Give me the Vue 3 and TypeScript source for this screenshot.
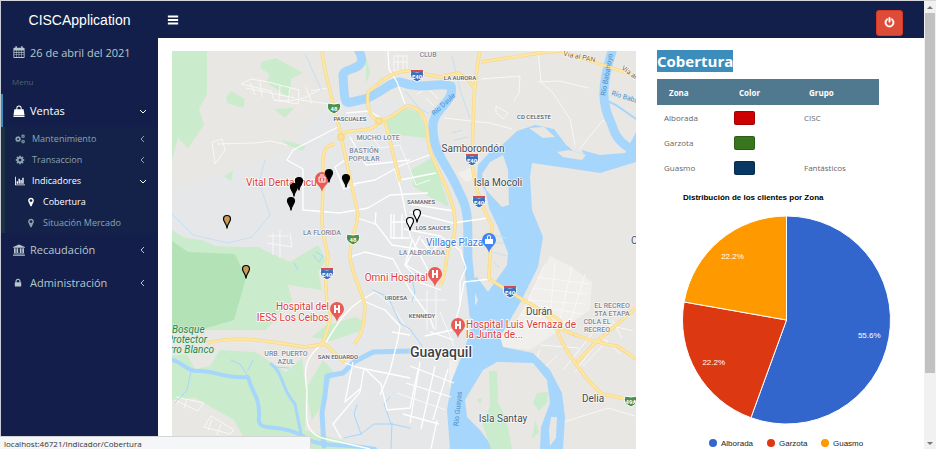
<script setup lang="ts">
import { computed, ref } from 'vue'

interface Shape { d: string; t?: string }
interface Label { x: number; y: number; text: string; kind: string; anchor?: string; turn?: number }
interface Zone { name: string; color: string; group: string }

const cog = 'M1152 896q0-106-75-181t-181-75-181 75-75 181 75 181 181 75 181-75 75-181zm512-109v222q0 12-8 23t-20 13l-185 28q-19 54-39 91 35 50 107 138 10 12 10 25t-9 23q-27 37-99 108t-94 71q-12 0-26-9l-138-108q-44 23-91 38-16 136-29 186-7 28-36 28h-222q-14 0-24.5-8.5t-11.5-21.5l-28-184q-49-16-90-37l-141 107q-10 9-25 9-14 0-25-11-126-114-165-168-7-10-7-23 0-12 8-23 15-21 51-66.5t54-70.5q-27-50-41-99l-183-27q-13-2-21-12.5t-8-23.5v-222q0-12 8-23t19-13l186-28q14-46 39-92-40-57-107-138-10-12-10-24 0-10 9-23 26-36 98.5-107.5t94.5-71.5q13 0 26 10l138 107q44-23 91-38 16-136 29-186 7-28 36-28h222q14 0 24.5 8.5t11.5 21.5l28 184q49 16 90 37l142-107q9-9 24-9 13 0 25 10 129 119 165 170 7 8 7 22 0 12-8 23-15 21-51 66.5t-54 70.5q26 50 41 98l183 28q13 2 21 12.5t8 23.5z'

const icons: Record<string, Shape[]> = {
  bars: [{ d: 'M128 240h1536v290H128zM128 750h1536v290H128zM128 1260h1536v290H128z' }],
  power: [{ d: 'M1664 896q0 156-61 298t-164 245-245 164-298 61-298-61-245-164-164-245-61-298q0-182 80.5-343t226.5-270q43-32 95.5-25t83.5 50q32 42 24.5 94.5t-49.5 84.5q-98 74-151.5 181t-53.5 228q0 104 40.5 198.5t109.5 163.5 163.5 109.5 198.5 40.5 198.5-40.5 163.5-109.5 109.5-163.5 40.5-198.5q0-121-53.5-228t-151.5-181q-42-32-49.5-84.5t24.5-94.5q31-43 84-50t95 25q146 109 226.5 270t80.5 343zm-640-768v640q0 52-38 90t-90 38-90-38-38-90v-640q0-52 38-90t90-38 90 38 38 90z' }],
  calendar: [{ d: 'M64 380q0-120 120-120h170V130q0-130 110-130t110 130v130h644V130q0-130 110-130t110 130v130h170q120 0 120 120v1290q0 122-120 122H184q-120 0-120-122zM190 660v250h270V660zm350 0v250h310V660zm390 0v250h310V660zm390 0v250h280V660zM190 990v270h270V990zm350 0v270h310V990zm390 0v270h310V990zm390 0v270h280V990zM190 1340v320h270v-320zm350 0v320h310v-320zm390 0v320h310v-320zm390 0v320h280v-320z' }],
  bag: [{ d: 'M500 620V470a396 396 0 0 1 792 0v150h290l140 920H70l140-920zm140 0h512V470a256 256 0 0 0-512 0zM60 1600h1672v120q0 60-60 60H120q-60 0-60-60z' }],
  cogs: [
    { d: cog, t: 'translate(-80 290) scale(.7)' },
    { d: cog, t: 'translate(1060 0) scale(.43)' },
    { d: cog, t: 'translate(1060 980) scale(.43)' }
  ],
  cog: [{ d: cog }],
  chart: [{ d: 'M0 130h150v1390h1642v150H0zM290 960h240v420H290zM630 480h240v900H630zM970 720h240v660H970zM1310 300h240v1080h-240z' }],
  marker: [{ d: 'M1152 640q0-106-75-181t-181-75-181 75-75 181 75 181 181 75 181-75 75-181zm256 0q0 109-33 179l-364 774q-16 33-47.5 52t-67.5 19-67.5-19-46.5-52l-365-774q-33-70-33-179 0-212 150-362t362-150 362 150 150 362z' }],
  bank: [{ d: 'M896 60l880 380v110H16V440zM150 630h250v720H150zM520 630h250v720H520zM1020 630h250v720h-250zM1390 630h250v720h-250zM90 1410h1610v130H90zM10 1590h1772v150H10z' }],
  lock: [{ d: 'M640 768h512v-192q0-106-75-181t-181-75-181 75-75 181v192zm832 96v576q0 40-28 68t-68 28h-960q-40 0-68-28t-28-68v-576q0-40 28-68t68-28h32v-192q0-184 132-316t316-132 316 132 132 316v192h32q40 0 68 28t28 68z' }]
}

const menuOpen = ref(true)
const subItems = [
  { icon: 'cogs', text: 'Mantenimiento', open: false },
  { icon: 'cog', text: 'Transaccion', open: false },
  { icon: 'chart', text: 'Indicadores', open: true }
]
const leaves = [
  { text: 'Cobertura', active: true },
  { text: 'Situación Mercado', active: false }
]
const zones: Zone[] = [
  { name: 'Alborada', color: 'red', group: 'CISC' },
  { name: 'Garzota', color: 'green', group: '' },
  { name: 'Guasmo', color: 'navy', group: 'Fantásticos' }
]

const shares = [
  { name: 'Alborada', value: 5, color: '#3366cc', x: 56 },
  { name: 'Garzota', value: 2, color: '#dc3912', x: 114 },
  { name: 'Guasmo', value: 2, color: '#ff9900', x: 168 }
]
const slices = computed(() => {
  const total = shares.reduce((sum, s) => sum + s.value, 0)
  const at = (turn: number, r: number) => [129.5 + r * Math.sin(turn * 2 * Math.PI), 140 - r * Math.cos(turn * 2 * Math.PI)]
  let from = 0
  return shares.map((s) => {
    const part = s.value / total
    const [ax, ay] = at(from, 104)
    const [bx, by] = at(from + part, 104)
    const [lx, ly] = at(from + part / 2, 84)
    from += part
    return {
      color: s.color,
      d: `M129.5 140L${ax} ${ay}A104 104 0 ${part > 0.5 ? 1 : 0} 1 ${bx} ${by}Z`,
      lx,
      ly: ly + 3,
      text: `${(part * 100).toFixed(1)}%`
    }
  })
})

const places: Label[] = [
  { x: 428, y: 57, text: 'CLUB', kind: 'area' },
  { x: 460, y: 80, text: 'LA AURORA', kind: 'hood' },
  { x: 350, y: 121, text: 'PASCUALES', kind: 'hood' },
  { x: 378, y: 140, text: 'MUCHO LOTE', kind: 'area' },
  { x: 364, y: 153, text: 'BASTIÓN', kind: 'area' },
  { x: 364, y: 161, text: 'POPULAR', kind: 'area' },
  { x: 534, y: 119, text: 'CD CELESTE', kind: 'hood' },
  { x: 473, y: 152, text: 'Samborondón', kind: 'town' },
  { x: 498, y: 186, text: 'Isla Mocoli', kind: 'town' },
  { x: 421, y: 204, text: 'SAMANES', kind: 'hood' },
  { x: 433, y: 230, text: 'LOS SAUCES', kind: 'hood' },
  { x: 322, y: 235, text: 'LA FLORIDA', kind: 'area' },
  { x: 422, y: 255, text: 'LA ALBORADA', kind: 'area' },
  { x: 396, y: 300, text: 'URDESA', kind: 'hood' },
  { x: 422, y: 318, text: 'KENNEDY', kind: 'hood' },
  { x: 539, y: 315, text: 'Durán', kind: 'town' },
  { x: 612, y: 308, text: 'EL RECREO', kind: 'area' },
  { x: 612, y: 316, text: '5TA ETAPA', kind: 'area' },
  { x: 597, y: 324, text: 'CDLA EL', kind: 'area' },
  { x: 597, y: 332, text: 'RECREO', kind: 'area' },
  { x: 286, y: 356, text: 'URB. PUERTO', kind: 'area' },
  { x: 286, y: 364, text: 'AZUL', kind: 'area' },
  { x: 338, y: 359, text: 'SAN EDUARDO', kind: 'hood' },
  { x: 441, y: 357, text: 'Guayaquil', kind: 'city' },
  { x: 503, y: 422, text: 'Isla Santay', kind: 'town' },
  { x: 593, y: 402, text: 'Delia', kind: 'town' },
  { x: 631, y: 244, text: 'C', kind: 'town', anchor: 'start' },
  { x: 246, y: 186, text: 'Vital Dentalmcu', kind: 'poi', anchor: 'start' },
  { x: 428, y: 281, text: 'Omni Hospital', kind: 'poi', anchor: 'end' },
  { x: 329, y: 310, text: 'Hospital del', kind: 'poi', anchor: 'end' },
  { x: 329, y: 321, text: 'IESS Los Ceibos', kind: 'poi', anchor: 'end' },
  { x: 466, y: 328, text: 'Hospital Luis Vernaza de', kind: 'poi', anchor: 'start' },
  { x: 466, y: 338, text: 'la Junta de...', kind: 'poi', anchor: 'start' },
  { x: 426, y: 246, text: 'Village Plaza', kind: 'shop', anchor: 'start' },
  { x: 172, y: 333, text: 'Bosque', kind: 'park', anchor: 'start' },
  { x: 207, y: 343, text: 'Protector', kind: 'park', anchor: 'end' },
  { x: 214, y: 353, text: 'Cerro Blanco', kind: 'park', anchor: 'end' },
  { x: 445, y: 106, text: 'Río Daule', kind: 'stretch', turn: -43 },
  { x: 609, y: 75, text: 'Río Babahoyo', kind: 'stretch', turn: -80 },
  { x: 611, y: 95, text: 'Río Babahoyo', kind: 'stretch', anchor: 'start', turn: 17 },
  { x: 460, y: 409, text: 'Río Guayas', kind: 'stretch', turn: -84 },
  { x: 579, y: 59, text: 'Vía al PAN', kind: 'road', turn: 12 },
  { x: 621, y: 69, text: 'Vía al PAN', kind: 'road', anchor: 'start', turn: 36 }
]
const shields = [
  { x: 417, y: 76, text: 'E40' }, { x: 472, y: 160, text: 'E40' }, { x: 479, y: 202, text: 'E40' },
  { x: 510, y: 292, text: 'E40' }, { x: 327, y: 274, text: 'E40' },
  { x: 334, y: 108, text: '48' }, { x: 353, y: 239, text: '48' }, { x: 631, y: 401, text: '49A' }
]
const pois = [
  { x: 322, y: 179, kind: 'dental' }, { x: 435, y: 274, kind: 'hospital' },
  { x: 337, y: 309, kind: 'hospital' }, { x: 458, y: 325, kind: 'hospital' }, { x: 489, y: 240, kind: 'shop' }
]
const pins = [
  { x: 299, y: 182, kind: 'dark' }, { x: 294, y: 188, kind: 'dark' }, { x: 291, y: 202, kind: 'dark' },
  { x: 329, y: 174, kind: 'dark' }, { x: 346, y: 179, kind: 'dark' },
  { x: 227, y: 220, kind: 'tan' }, { x: 246, y: 270, kind: 'tan' },
  { x: 417, y: 214, kind: 'clear' }, { x: 410, y: 222, kind: 'clear' }
]
const highways = [
  'M322 51C323 66 329 88 335 110C338 126 341 132 346 160L358 214C357 228 350 238 350 257C352 277 364 294 365 307C364 325 362 335 354 344',
  'M335 144C321 145 323 158 323 180L322 220C322 240 328 249 328 258C324 275 326 285 327 304C333 313 331 322 322 344L310 347',
  'M341 136C344 129 356 132 369 129C378 127 377 122 384 119C393 119 401 107 408 106C422 108 427 118 428 140C431 163 444 175 453 207C457 224 455 240 448 250C445 264 447 272 440 286',
  'M379 121C368 117 367 105 368 92C381 82 389 72 408 71L440 77L458 73L467 79L475 89',
  'M385 121L400 181',
  'M480 51C477 64 476 78 474 96L472 160C473 186 483 208 492 226C492 238 489 262 489 279L535 307C562 319 567 324 556 330',
  'M481 62L540 53L560 51L636 76',
  'M521 300C539 306 555 321 559 335C568 357 591 385 602 394L630 400',
  'M556 326C568 334 601 344 617 346L636 359', 'M636 308L593 345L577 362',
  'M207 343C237 335 268 341 304 347L325 344L345 363'
]
const streets = [
  'M338 127L293 150L287 160L303 169L303 210L340 213L368 208L390 195L428 193',
  'M346 113L369 111L381 118', 'M388 51L389 69L397 82L405 104', 'M345 160L335 167L344 189L356 185',
  'M353 184L375 180L402 165L432 154', 'M350 137L366 165L410 160',
  'M350 257L365 252L393 259L410 290', 'M357 218L376 224L392 245L435 252', 'M376 212L375 225',
  'M395 169L401 190L410 235L436 286', 'M400 180L436 173',
  'M410 204L454 211', 'M410 212L453 223L488 218',
  'M404 229L440 236L460 250L466 268L460 282L460 305L453 330', 'M412 240L405 265L421 283L441 290', 'M420 236L406 265L425 276',
  'M421 239L431 253L443 240', 'M391 214V238H410M394 214V238M402 214V238M391 222H409',
  'M322 344C306 357 303 367 307 390C307 415 302 431 322 438L370 449', 'M325 344C340 318 348 309 360 301L375 292',
  'M366 302L385 310L400 326L398 339L390 371L380 395', 'M345 363L356 367L410 378', 'M353 362L345 402L361 388',
  'M364 368L360 392L333 424L341 438', 'M364 368L381 384L387 410L410 408L418 370M392 332L410 335',
  'M410 366L454 383M406 383L451 397M420 362L410 423M435 366L421 429M448 369L433 420M403 414L439 424M437 420L431 449',
  'M430 332L454 340M425 336L452 330M410 290L430 318L434 329',
  'M491 279L464 282L460 305'
]
const lanes = [
  'M241 84L271 91L274 100L298 104L299 90L268 82L251 79ZM250 82L255 95M260 82L262 97M280 86L279 101M290 88L288 102M246 88L295 98',
  'M274 100L289 101L304 98L323 88M306 87L312 104M311 91L328 88M300 100L330 104', 'M212 142L215 164L225 150L222 139ZM217 144L254 143L271 141L287 145',
  'M538 51L541 82L553 93L570 119L575 145', 'M481 79L520 76L519 93L514 101', 'M538 82L559 81L589 88', 'M444 118L490 123L512 129', 'M574 146L578 151L603 120L620 137',
  'M267 243L292 247L290 233M273 233V255M280 230V258M268 236H288', 'M176 397L204 403L198 411L175 400M180 396L177 404M187 399L184 408M204 427L211 416L234 430L230 434ZM212 419L208 430M221 424L217 435',
  'M564 422L608 408L635 416', 'M540 350L535 362M558 355L545 367M593 348L575 372', 'M394 56V71H407V56ZM398 56V71M403 56V71M394 62H407M426 98L434 106M430 90L438 99M417 94L440 80M496 106L508 113L503 119L496 113Z',
  'M369 133L380 148L400 145L416 185L430 180M397 393L446 410M440 312L454 346M407 300L447 300M436 290V330M427 290V330M375 292L392 306L408 330',
  'M545 264L527 303M555 262L550 317M572 266L560 319M585 274L571 320M537 277L589 284M532 288L587 294M529 300L585 304M536 306L583 314M535 324L565 322M520 315L559 318',
  'M540 345L579 348M563 370L592 334M583 366L608 340M600 336L621 354M605 324L633 331M612 320L622 338'
]
</script>

<template>
  <div class="page">
    <div class="app">
      <header class="topbar">
        <a class="brand" href="#">CISCApplication</a>
        <button class="toggle" type="button" aria-label="Menu" :aria-expanded="menuOpen">
          <svg viewBox="0 0 1792 1792"><path v-for="(s, i) in icons.bars" :key="i" :d="s.d" /></svg>
        </button>
        <button class="logout" type="button" aria-label="Salir">
          <svg viewBox="0 0 1792 1792"><path v-for="(s, i) in icons.power" :key="i" :d="s.d" /></svg>
        </button>
      </header>

      <div class="body">
        <nav class="side">
          <div class="date">
            <svg class="ico big" viewBox="0 0 1792 1792"><path v-for="(s, i) in icons.calendar" :key="i" :d="s.d" fill-rule="evenodd" /></svg>
            <span>26 de abril del 2021</span>
          </div>
          <div class="heading">Menu</div>
          <a class="item current" href="#">
            <svg class="ico big" viewBox="0 0 1792 1792"><path v-for="(s, i) in icons.bag" :key="i" :d="s.d" fill-rule="evenodd" /></svg>
            <span>Ventas</span>
            <svg class="arrow down" viewBox="0 0 8 8"><path d="M5 1L2 4L5 7" /></svg>
          </a>
          <div class="sub">
            <a v-for="s in subItems" :key="s.text" class="subitem" :class="{ open: s.open }" href="#">
              <svg class="ico" viewBox="0 0 1792 1792"><path v-for="(p, i) in icons[s.icon]" :key="i" :d="p.d" :transform="p.t" fill-rule="evenodd" /></svg>
              <span>{{ s.text }}</span>
              <svg class="arrow" :class="{ down: s.open }" viewBox="0 0 8 8"><path d="M5 1L2 4L5 7" /></svg>
            </a>
            <a v-for="l in leaves" :key="l.text" class="subitem leaf" :class="{ open: l.active }" href="#">
              <svg class="ico" viewBox="0 0 1792 1792"><path v-for="(p, i) in icons.marker" :key="i" :d="p.d" /></svg>
              <span>{{ l.text }}</span>
            </a>
          </div>
          <a class="item" href="#">
            <svg class="ico big" viewBox="0 0 1792 1792"><path v-for="(s, i) in icons.bank" :key="i" :d="s.d" /></svg>
            <span>Recaudación</span>
            <svg class="arrow" viewBox="0 0 8 8"><path d="M5 1L2 4L5 7" /></svg>
          </a>
          <a class="item" href="#">
            <svg class="ico lock" viewBox="0 0 1792 1792"><path v-for="(s, i) in icons.lock" :key="i" :d="s.d" /></svg>
            <span>Administración</span>
            <svg class="arrow" viewBox="0 0 8 8"><path d="M5 1L2 4L5 7" /></svg>
          </a>
        </nav>

        <main class="content">
          <div class="mapbox">
            <svg class="map" viewBox="172 51 464 398" role="img" aria-label="Mapa">
              <rect class="land" x="172" y="51" width="464" height="398" />
              <path class="urban" d="M290 150L330 100L400 100L440 110L445 165L468 230L470 330L450 400L455 449L330 449L325 360L372 300L330 250L240 262L172 236V190Z" />
              <path class="green" d="M172 51H207V94L199 109L204 125L188 148L178 138L172 160ZM226 97L231 91L245 99L243 108L227 103ZM262 62L276 58L303 73L291 79L290 98L266 82L270 75L260 67ZM274 109L294 108L285 118ZM282 140L306 146L302 151L286 144ZM224 176L233 171L231 181ZM366 57L370 72L366 84ZM386 118L402 107L418 112L426 128L426 138L390 134ZM411 170L433 157L449 207L430 197L413 186Z" />
              <path class="pale" d="M172 230L185 238L202 240L215 246L240 247L258 247L290 262L318 245L326 260L318 272L322 290L288 285L292 300L266 330L172 330Z" />
              <path class="forest" d="M172 241L188 252L235 254L246 278L234 320L200 330L172 331Z" />
              <path class="pale" d="M172 356L187 354L195 369L210 366L220 350L255 352L286 372L302 358L306 390L305 430L372 449H250L234 420L195 398L172 400Z" />
              <path class="green" d="M312 337L325 326L355 317L366 322L360 331L331 341ZM323 360L334 372L320 408L312 420L305 390Z" />
              <path class="sand" d="M457 173L472 167L477 178L466 182ZM449 360L458 362L449 390ZM510 334L500 336L503 347L530 350L560 330L590 310L592 282L570 266L550 256L537 281Z" />
              <path v-for="(d, i) in lanes" :key="'l' + i" class="lane" :d="d" />
              <path class="river" stroke-width="9" d="M358 49C371 72 345 66 343 75C345 110 343 103 365 99C385 91 389 82 400 82C424 91 438 81 451 86C456 101 431 110 433 128C433 155 449 166 459 192C471 213 467 229 468 260L474 315" />
              <path class="river" stroke-width="9" d="M613 48C600 89 602 105 612 125C615 138 625 148 639 152" />
              <path class="river" stroke-width="2" d="M605 100C620 105 628 115 638 120" />
              <path class="water" fill-rule="evenodd" d="M636 132L625 153L600 155L567 146L554 129L535 125L517 131L502 145L490 152L478 165L477 178L486 192L489 208L498 227L508 253L507 265L488 292L477 277L471 280L473 323L463 353L452 380L447 410L450 449H563L565 417L562 393L550 370L533 353L503 347L500 337L510 320L520 303L538 267L543 237L532 210L530 177L532 163L567 168L600 173L636 162Z" />
              <path class="land" d="M490 162L503 155L508 170L509 205L502 207L486 190L482 174ZM497 362L533 363L547 380L550 403L541 427L540 449H494L480 430L467 417L465 400L483 370ZM551 417L557 417L556 438L550 446L549 430ZM529 128L544 127L555 137L543 138ZM557 152L569 150L586 155L582 160L563 157ZM567 145L581 149L584 154L573 151ZM475 293L478 300L475 306Z" />
              <path class="green" d="M489 371L497 371L498 403L506 417L512 449H491L482 422L490 407ZM537 393L548 392L547 403L539 411L533 403ZM535 420L539 432L532 439ZM477 399L483 398L480 404Z" />
              <path class="river" stroke-width="4" d="M172 360C183 362 187 372 199 371C214 370 223 379 248 377C252 393 260 397 259 416C256 436 280 419 309 440C323 447 350 444 375 449" />
              <path class="river" stroke-width="3" d="M271 364C284 373 281 389 295 404L302 439" />
              <path class="river" stroke-width="5" d="M410 351L373 352L354 362L343 373L327 376L325 395L322 413L324 446" />
              <path class="river" stroke-width="1" d="M191 372L187 390L175 403M248 376L240 364L231 360M248 370L253 360M275 367L289 368M344 438L361 434L374 424L392 424L410 428M392 423L391 449M391 424L384 404L390 397M361 434L354 414L357 405M313 255L319 262L323 256L316 252M294 263L298 270M410 270L415 292L412 301M373 290L388 297L400 323L410 329L422 346" />
              <path class="stream" d="M172 214L193 235L228 243L252 237L270 215L259 182L265 160M322 91L305 54M405 91L420 109L430 114M452 56L460 90L470 118" />
              <path class="stream" d="M452 133L462 130M454 140L468 137M495 235L507 238M495 243H504M493 252L506 256M494 263L500 268" />
              <path v-for="(d, i) in streets" :key="'s' + i" class="street" :d="d" />
              <path v-for="(d, i) in highways" :key="'c' + i" class="casing" :d="d" />
              <path v-for="(d, i) in highways" :key="'h' + i" class="highway" :d="d" />
              <circle class="junction" cx="341" cy="137" r="3" />
              <circle class="junction" cx="379" cy="121" r="3" />

              <g v-for="(s, i) in shields" :key="'e' + i" :transform="`translate(${s.x} ${s.y})`">
                <path :class="s.text === 'E40' ? 'shield blue' : 'shield greenish'" d="M-6 -5Q0 -3 6 -5Q9 2 0 6Q-9 2 -6 -5Z" />
                <path v-if="s.text === 'E40'" class="crown" d="M-6 -6H6V-4H-6Z" />
                <text class="route" x="0" y="3">{{ s.text }}</text>
              </g>
              <text
                v-for="(p, i) in places" :key="'t' + i" :class="p.kind" :x="p.x" :y="p.y"
                :text-anchor="p.anchor ?? 'middle'" :transform="p.turn ? `rotate(${p.turn} ${p.x} ${p.y})` : undefined"
              >{{ p.text }}</text>
              <g v-for="(p, i) in pois" :key="'p' + i" :transform="`translate(${p.x} ${p.y})`">
                <path :class="p.kind === 'shop' ? 'drop blueish' : 'drop'" d="M0 13C-1 7 -7 5 -7 0A7 7 0 0 1 7 0C7 5 1 7 0 13Z" />
                <path v-if="p.kind === 'hospital'" class="mark" d="M-2 -4V4M2 -4V4M-2 0H2" />
                <path v-else-if="p.kind === 'dental'" class="mark thin" d="M-3 -2H3V3H-3ZM-2 -4H2M0 -1V2M-1 1H1" />
                <path v-else class="bagmark" fill-rule="evenodd" d="M-4 -1H-2V-3A2 2 0 0 1 2 -3V-1H4V4H-4ZM-1 -1H1V-3A1 1 0 0 0 -1 -3Z" />
              </g>
              <path
                v-for="(p, i) in pins" :key="'m' + i" class="pin" :class="p.kind" :transform="`translate(${p.x} ${p.y})`"
                d="M0 8.500C0 4 -3.500 2 -3.500 -1A3.500 3.500 0 0 1 3.500 -1C3.500 2 0 4 0 8.500Z"
              />
            </svg>
          </div>

          <section class="panel">
            <h1><span>Cobertura</span></h1>
            <table>
              <thead>
                <tr><th class="narrow" scope="col">Zona</th><th class="narrow" scope="col">Color</th><th scope="col">Grupo</th></tr>
              </thead>
              <tbody>
                <tr v-for="z in zones" :key="z.name">
                  <td>{{ z.name }}</td>
                  <td><span class="swatch" :class="z.color"></span></td>
                  <td>{{ z.group }}</td>
                </tr>
              </tbody>
            </table>
            <svg class="pie" viewBox="0 0 267 269" role="img" aria-label="Distribución de los clientes por Zona">
              <text class="ptitle" x="26" y="20">Distribución de los clientes por Zona</text>
              <path v-for="s in slices" :key="s.color" class="slice" :d="s.d" :fill="s.color" />
              <text v-for="s in slices" :key="s.color" class="pct" :x="s.lx" :y="s.ly">{{ s.text }}</text>
              <g v-for="s in shares" :key="s.name">
                <circle :cx="s.x" cy="263" r="4" :fill="s.color" />
                <text class="legend" :x="s.x + 8" y="266">{{ s.name }}</text>
              </g>
            </svg>
          </section>
        </main>
      </div>
    </div>

    <div class="scroll" aria-hidden="true">
      <svg viewBox="0 0 12 12"><path d="M3 8L6 5L9 8Z" /></svg>
      <div class="track"><div class="thumb"></div></div>
      <svg viewBox="0 0 12 12"><path d="M3 5L6 8L9 5Z" /></svg>
    </div>
    <div class="status">localhost:46721/Indicador/Cobertura</div>
  </div>
</template>

<style>
body {
  margin: 0;
  background: #fff;
}
</style>

<style scoped>
* {
  box-sizing: border-box;
}
.page {
  display: flex;
  height: 100vh;
  overflow: hidden;
  border-top: 1px solid #d4d6db;
  border-left: 1px solid #c9ccd4;
  font-family: "Open Sans", "Noto Sans", sans-serif;
}
.app {
  flex: 1;
  min-width: 0;
  display: flex;
  flex-direction: column;
}
.topbar {
  display: flex;
  align-items: center;
  height: 37px;
  flex: none;
  background: #121f4a;
}
.brand {
  width: 157px;
  text-align: center;
  color: #fff;
  text-decoration: none;
  font: 14px/34px "Liberation Sans", Arial, sans-serif;
}
.toggle {
  margin-left: 9px;
  padding: 0;
  border: 0;
  background: none;
  display: flex;
}
.toggle svg {
  width: 12px;
  height: 12px;
  fill: #fff;
}
.logout {
  margin: 6px 21px 0 auto;
  width: 27px;
  height: 26px;
  border: 1px solid #d73925;
  border-radius: 3px;
  background: #dd4b39;
  display: flex;
  align-items: center;
  justify-content: center;
  padding: 0;
}
.logout svg {
  width: 11px;
  height: 11px;
  fill: #fff;
  stroke: #fff;
  stroke-width: 60px;
}
.body {
  display: flex;
  flex: 1;
  min-height: 0;
}
.side {
  width: 157px;
  flex: none;
  background: #131f4a;
  color: #b8c7ce;
  font-size: 11px;
}
.side a {
  color: inherit;
  text-decoration: none;
}
.date,
.item {
  display: flex;
  align-items: center;
  height: 33px;
  padding: 0 11px 0 10px;
  border-left: 2px solid transparent;
}
.date span,
.item span {
  flex: 1;
  white-space: nowrap;
}
.date {
  height: 28px;
}
.heading {
  height: 28px;
  padding-left: 11px;
  font-size: 8px;
  line-height: 32px;
  color: #4b646f;
}
.side .item.current {
  color: #fff;
  border-left-color: #3c8dbc;
}
.ico {
  width: 10px;
  height: 10px;
  flex: none;
  margin-right: 7px;
  fill: currentColor;
}
.ico.big {
  width: 12px;
  height: 12px;
  margin-right: 5px;
}
.arrow {
  width: 8px;
  height: 8px;
  fill: none;
  stroke: currentColor;
}
.arrow.down {
  transform: rotate(-90deg);
}
.sub {
  padding-top: 1px;
  border-left: 4px solid #1e3045;
  background: #14224a;
}
.subitem {
  display: flex;
  align-items: center;
  height: 21px;
  padding: 0 11px 0 10px;
  font-size: 9px;
}
.side .subitem {
  color: #8aa4af;
}
.subitem span {
  flex: 1;
  white-space: nowrap;
}
.side .subitem.open {
  color: #fff;
}
.side .leaf {
  padding-left: 21px;
}
.content {
  flex: 1;
  min-width: 0;
  display: flex;
  align-items: flex-start;
  gap: 21px;
  padding: 12px 0 0 14px;
  background: #fff;
}
.mapbox {
  flex: 464 1 0;
  min-width: 0;
  padding-top: 1px;
}
.map,
.pie {
  display: block;
  width: 100%;
}
.map {
  font-family: Roboto, sans-serif;
}
.panel {
  flex: 267 1 0;
  min-width: 0;
}
h1 {
  margin: 0 0 7px;
  font-size: 15px;
  line-height: 22px;
  color: #fff;
}
h1 span {
  display: inline-block;
  background: #3c8dbc;
}
table {
  width: 83%;
  table-layout: fixed;
  border-collapse: collapse;
  font-size: 8px;
  color: #666;
}
th,
td {
  height: 25px;
  padding: 0 7px;
  text-align: left;
}
th {
  height: 26px;
  padding: 0 12px;
  background: #50788e;
  color: #fff;
}
.narrow {
  width: 70px;
}
.swatch {
  display: block;
  width: 21px;
  height: 14px;
  border: 1px solid #0003;
  border-radius: 2px;
}
.swatch.red { background: #c00; }
.swatch.green { background: #38761d; }
.swatch.navy { background: #073763; }

.land { fill: #e8e7e3; }
.urban { fill: #e6e7e9; }
.green,
.pale { fill: #caeccc; }
.forest { fill: #b3e2b7; }
.sand { fill: #f0efec; }
.water { fill: #a6d6fc; }
.river { fill: none; stroke: #a6d6fc; stroke-linecap: round; stroke-linejoin: round; }
.stream { fill: none; stroke: #c6dff2; stroke-width: 1; }
.lane { fill: none; stroke: #f8f8f7; stroke-width: 1; }
.street { fill: none; stroke: #fff; stroke-width: 1.3; stroke-linejoin: round; }
.casing { fill: none; stroke: #f5d98f; stroke-width: 3.4; stroke-linejoin: round; }
.highway { fill: none; stroke: #ffe7a0; stroke-width: 2; stroke-linejoin: round; }
.junction { fill: none; stroke: #f7da8b; stroke-width: 2; }
.shield { stroke: #fff; stroke-width: 1; }
.shield.blue { fill: #3b70bd; }
.shield.greenish { fill: #4c9150; }
.crown { fill: #cf4c50; }
.route { font-size: 6px; font-weight: 700; fill: #fff; text-anchor: middle; }
.drop { fill: #e85b56; }
.drop.blueish { fill: #4285f4; }
.mark { fill: none; stroke: #fff; stroke-width: 2; }
.mark.thin { stroke-width: 1; }
.bagmark { fill: #fff; }
.map text { paint-order: stroke; }
.area, .hood { stroke: #ffffffb0; stroke-width: 1.5px; font-weight: 500; }
.area { font-size: 7px; fill: #7d879c; }
.hood { font-size: 6px; fill: #55606f; }
.town { font-size: 10px; fill: #444a52; stroke: #ffffffc0; stroke-width: 1.5px; }
.city { font-size: 14px; font-weight: 500; fill: #3c4148; stroke: #fff; stroke-width: 2px; }
.poi { font-size: 10px; fill: #d83c3c; stroke: #fff; stroke-width: 1.5px; }
.shop { font-size: 10px; fill: #3c78d8; stroke: #fff; stroke-width: 1.5px; }
.park { font-size: 10px; font-style: italic; fill: #29834a; stroke: #dff3e0; stroke-width: 1px; }
.stretch, .road { font-size: 7px; }
.stretch { fill: #4a8bc9; }
.road { fill: #8b5b20; stroke: #fff; stroke-width: 1px; }
.pin { stroke: #000; stroke-width: 1.2; }
.pin.dark { fill: #000; }
.pin.tan { fill: #c99a56; }
.pin.clear { fill: #fff; }

.pie {
  font-family: "Liberation Sans", Arial, sans-serif;
  font-size: 8px;
}
.ptitle { font-weight: 700; fill: #000; }
.slice { stroke: #fff; stroke-width: 1; }
.pct { fill: #fff; text-anchor: middle; }
.legend { fill: #222; }

.scroll {
  width: 12px;
  flex: none;
  display: flex;
  flex-direction: column;
  background: #f1f1f1;
}
.scroll svg {
  width: 12px;
  height: 12px;
  fill: #777;
}
.track {
  flex: 1;
  padding: 0 1px;
}
.thumb {
  height: 85%;
  background: #c1c1c1;
}
.status {
  position: fixed;
  left: 0;
  bottom: 0;
  width: 311px;
  height: 13px;
  padding-left: 4px;
  border: 1px solid #d5d6d8;
  border-left: 0;
  border-bottom: 0;
  border-top-right-radius: 2px;
  background: #f5f6f7;
  color: #333;
  font-size: 8px;
  line-height: 13px;
}
</style>
